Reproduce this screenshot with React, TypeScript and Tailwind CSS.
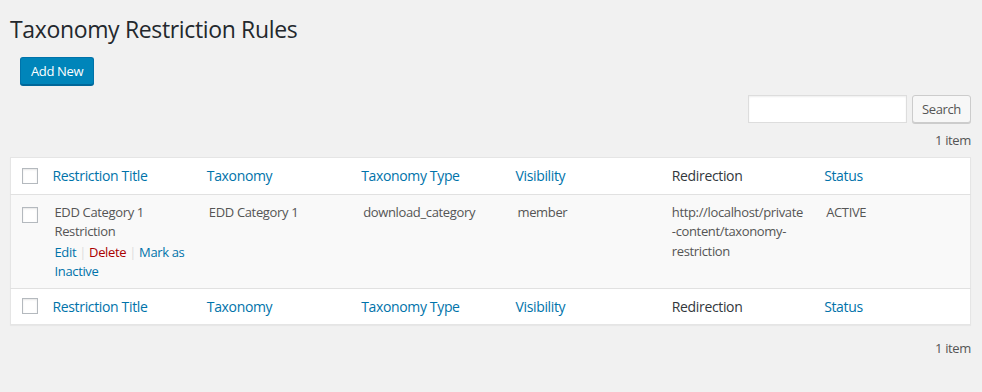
import React from 'react';

const font = { fontFamily: '"Open Sans", "Noto Sans", Arial, sans-serif' };

type Col = { label: string; sortable: boolean };

const columns: Col[] = [
  { label: 'Restriction Title', sortable: true },
  { label: 'Taxonomy', sortable: true },
  { label: 'Taxonomy Type', sortable: true },
  { label: 'Visibility', sortable: true },
  { label: 'Redirection', sortable: false },
  { label: 'Status', sortable: true },
];

function Checkbox() {
  return (
    <span className="block w-4 h-4 bg-white border border-[#b4b9be] shadow-[inset_0_1px_2px_rgba(0,0,0,0.1)]" />
  );
}

function HeaderRow({ footer }: { footer?: boolean }) {
  return (
    <tr className={footer ? 'border-t border-[#e1e1e1]' : 'border-b border-[#e1e1e1]'}>
      <th className="w-[34px] pl-[11px] align-middle">
        <Checkbox />
      </th>
      {columns.map(c => (
        <th
          key={c.label}
          className={`text-left font-normal text-[14px] leading-[19.6px] py-2 ${
            c.sortable ? 'px-2 text-[#0073aa]' : 'px-2.5 text-[#32373c]'
          }`}
        >
          {c.label}
        </th>
      ))}
    </tr>
  );
}

export default function App() {
  return (
    <div
      className="min-h-[392px] bg-[#f1f1f1] pl-[10px] pr-[11px] text-[13px] text-[#444] tracking-[-0.027em]"
      style={font}
    >
      <h1 className="pt-[14px] text-[23px] leading-[30px] font-normal text-[#23282d]">
        Taxonomy Restriction Rules
      </h1>

      <button className="mt-[13px] ml-[10px] h-[28px] px-[10px] rounded-[3px] bg-[#0085ba] border border-[#0073aa] border-b-[#006799] shadow-[0_1px_0_#006799] text-white text-[13px] leading-[26px]">
        Add New
      </button>

      <div className="flex justify-end items-center gap-[5px] mt-[10px]">
        <input className="w-[159px] h-[28px] bg-white border border-[#ddd] shadow-[inset_0_1px_2px_rgba(0,0,0,0.07)] outline-none" />
        <button className="h-[28px] px-[9px] rounded-[3px] bg-[#f7f7f7] border border-[#ccc] shadow-[0_1px_0_#ccc] text-[#555] text-[13px] leading-[26px]">
          Search
        </button>
      </div>

      <div className="text-right text-[#555] mt-[7px] leading-[20px]">1 item</div>

      <table className="mt-[7px] w-full table-fixed border-collapse bg-white border border-[#e5e5e5] shadow-[0_1px_1px_rgba(0,0,0,0.04)]">
        <colgroup>
          <col className="w-[34px]" />
          <col />
          <col />
          <col />
          <col />
          <col />
          <col />
        </colgroup>
        <thead>
          <HeaderRow />
        </thead>
        <tbody>
          <tr className="bg-[#f9f9f9] align-top text-[#555] leading-[19.5px]">
            <td className="pl-[11px] pt-3">
              <Checkbox />
            </td>
            <td className="px-2.5 pt-2 pb-[6px]">
              <div>
                EDD Category 1<br />
                Restriction
              </div>
              <div className="pt-[1px] text-[13px] whitespace-nowrap">
                <span className="text-[#0073aa]">Edit</span>
                <span className="text-[#ddd]"> | </span>
                <span className="text-[#a00]">Delete</span>
                <span className="text-[#ddd]"> | </span>
                <span className="text-[#0073aa]">Mark as</span>
                <br />
                <span className="text-[#0073aa]">Inactive</span>
              </div>
            </td>
            <td className="px-2.5 pt-2">EDD Category 1</td>
            <td className="px-2.5 pt-2">download_category</td>
            <td className="px-2.5 pt-2">member</td>
            <td className="px-2.5 pt-2 whitespace-nowrap">
              http://localhost/private
              <br />
              -content/taxonomy-
              <br />
              restriction
            </td>
            <td className="px-2.5 pt-2">ACTIVE</td>
          </tr>
        </tbody>
        <tfoot>
          <HeaderRow footer />
        </tfoot>
      </table>

      <div className="text-right text-[#555] mt-[13px] leading-[20px]">1 item</div>
    </div>
  );
}
